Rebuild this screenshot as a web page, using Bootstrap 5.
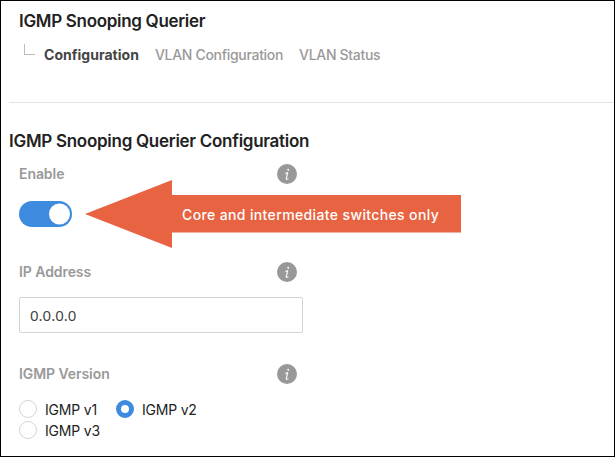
<!DOCTYPE html>
<html lang="en">
<head>
<meta charset="utf-8">
<meta name="viewport" content="width=device-width, initial-scale=1">
<title>IGMP Snooping Querier</title>
<link href="https://cdn.jsdelivr.net/npm/bootstrap@5.3.0/dist/css/bootstrap.min.css" rel="stylesheet">
<style>
body { font-family: Inter, "Liberation Sans", sans-serif; font-size: 14px; line-height: 20px; color: #222; background: #fff; }
.page-frame { height: 457px; border: 1px solid #000; white-space: nowrap; }
.page-title, .section-title { font-size: 17px; font-weight: 600; line-height: 24px; color: #222; margin: 0; }
.page-title { padding: 8px 0 0 18px; letter-spacing: -.31px; }
.section-title { padding: 26px 0 0 8px; letter-spacing: -.28px; }
.subnav { padding: 12px 0 0 23px; height: 69px; }
.subnav .nav-link { padding: 0; color: #999; font-weight: 500; margin-right: 16px; letter-spacing: -.31px; }
.subnav .nav-link.active { color: #444; font-weight: 700; letter-spacing: .03px; }
.branch { width: 11px; height: 11px; border: solid #bbb; border-width: 0 0 1px 1px; margin: -1px 9px 0 0; }
.rule { margin-left: 8px; border-top: 1px solid #e3e3e3; }
.field-head { width: 278px; margin-left: 18px; height: 20px; }
.enable-head { margin-top: 11px; }
.ip-head { margin-top: 35px; }
.version-head { margin-top: 31px; }
.field-label { color: #999; font-weight: 600; letter-spacing: -.07px; }
.switch-row { margin: 17px 0 0 18px; }
.toggle.form-check-input { width: 53px; height: 26px; margin: 0; border: 0; background-color: #3d8bde; background-image: none !important; border-radius: 13px; display: block; }
.toggle::after { content: ""; display: block; width: 21px; height: 21px; border-radius: 50%; background: #fff; transform: translate(30px, 2.5px); }
.ip-field.form-control { width: 284px; height: 36px; border: 1px solid #d4d4d4; border-radius: 2px; padding: 0 10px; font-family: "Noto Sans", sans-serif; font-size: 15px; color: #444; margin: 15px 0 0 18px; }
.choices { margin: 15px 0 0 18px; width: 240px; }
.choice { height: 21px; line-height: 22px; letter-spacing: -.2px; }
.choice .form-check-input { width: 18px; height: 18px; margin: 1px 8px 0 0; border: 1px solid #d4d4d4; background-image: none !important; background-color: #fff; }
.choice .form-check-input:checked { border: 5px solid #3d8bde; }
.choice-first { margin-right: 19px; }
.callout-arrow { left: 85px; top: 180px; width: 376px; height: 68px; }
.callout-text { left: 182px; top: 205px; color: #fff; font-weight: 500; font-size: 14px; line-height: 20px; letter-spacing: .37px; }
</style>
<script src="https://cdn.jsdelivr.net/npm/bootstrap@5.3.0/dist/js/bootstrap.bundle.min.js"></script>
</head>
<body>
<svg class="d-none" xmlns="http://www.w3.org/2000/svg">
  <symbol id="info" viewBox="0 0 20 20"><circle cx="10" cy="10" r="10" fill="#98989a"/><circle cx="11.2" cy="5.8" r=".95" fill="#fff"/><path d="M8.5 9.2 10.7 8.7 9.2 14.6Q9 15.7 11 15" fill="none" stroke="#fff" stroke-width="1.15" stroke-linejoin="round" stroke-linecap="round"/></symbol>
</svg>
<main class="page-frame overflow-hidden">
  <h1 class="page-title">IGMP Snooping Querier</h1>
  <nav class="nav subnav flex-nowrap align-items-start">
    <span class="branch"></span>
    <a class="nav-link active" href="#">Configuration</a>
    <a class="nav-link" href="#">VLAN Configuration</a>
    <a class="nav-link" href="#">VLAN Status</a>
  </nav>
  <div class="rule"></div>
  <h2 class="section-title">IGMP Snooping Querier Configuration</h2>
  <div class="field-head enable-head d-flex justify-content-between">
    <span class="field-label">Enable</span><svg width="20" height="20"><use href="#info"/></svg>
  </div>
  <div class="switch-row"><input class="form-check-input toggle" type="checkbox" checked aria-label="Enable"></div>
  <div class="field-head ip-head d-flex justify-content-between">
    <span class="field-label">IP Address</span><svg width="20" height="20"><use href="#info"/></svg>
  </div>
  <input class="form-control ip-field" value="0.0.0.0" aria-label="IP Address">
  <div class="field-head version-head d-flex justify-content-between">
    <span class="field-label">IGMP Version</span><svg width="20" height="20"><use href="#info"/></svg>
  </div>
  <div class="choices d-flex flex-wrap">
    <label class="choice choice-first d-flex align-items-start"><input class="form-check-input" type="radio" name="v">IGMP v1</label>
    <label class="choice d-flex align-items-start"><input class="form-check-input" type="radio" name="v" checked>IGMP v2</label>
    <label class="choice d-flex align-items-start"><input class="form-check-input" type="radio" name="v">IGMP v3</label>
  </div>
</main>
<svg class="callout-arrow position-absolute" viewBox="0 0 376 68"><path d="M0 34 87 0V15H376V52.5H87V68Z" fill="#e86342"/></svg>
<div class="callout-text position-absolute text-nowrap">Core and intermediate switches only</div>
</body>
</html>
